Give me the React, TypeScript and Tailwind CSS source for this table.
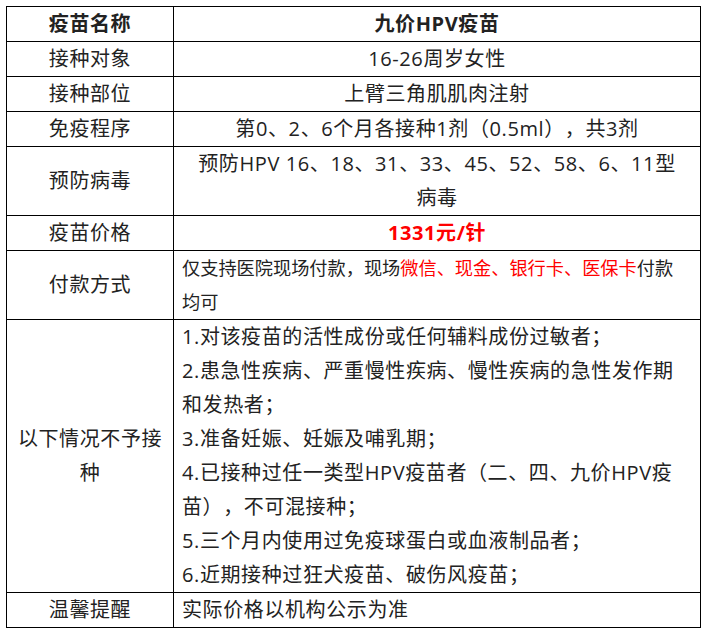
import React from "react";

const L = "border border-black p-0 text-center align-middle leading-[34px] w-[167px]";
const R = "border border-black px-2 py-0 align-middle leading-[34px]";

export default function App() {
  return (
    <div
      className="bg-white w-[705px] h-[632px] pt-[6px] pl-[6px] text-[#222] text-[20px] tracking-[0.6px] [text-spacing-trim:space-all]"
      style={{ fontFamily: '"Open Sans", "Noto Sans CJK SC", sans-serif' }}
    >
      <table className="border-collapse w-[695px] table-fixed">
        <colgroup>
          <col className="w-[167px]" />
          <col />
        </colgroup>
        <tbody>
          <tr>
            <td className={L + " font-bold"}>疫苗名称</td>
            <td className={R + " text-center font-bold"}>九价HPV疫苗</td>
          </tr>
          <tr>
            <td className={L}>接种对象</td>
            <td className={R + " text-center"}>16-26周岁女性</td>
          </tr>
          <tr>
            <td className={L}>接种部位</td>
            <td className={R + " text-center"}>上臂三角肌肌肉注射</td>
          </tr>
          <tr>
            <td className={L}>免疫程序</td>
            <td className={R + " text-center whitespace-nowrap"}>第0、2、6个月各接种1剂（0.5ml），共3剂</td>
          </tr>
          <tr>
            <td className={L}>预防病毒</td>
            <td className={R + " text-center"}>
              <div className="whitespace-nowrap">预防HPV 16、18、31、33、45、52、58、6、11型</div>
              <div>病毒</div>
            </td>
          </tr>
          <tr>
            <td className={L}>疫苗价格</td>
            <td className={R + " text-center font-bold text-[#ff0000]"}>1331元/针</td>
          </tr>
          <tr>
            <td className={L}>付款方式</td>
            <td className={R + " text-left text-[18.2px] tracking-[0px]"}>
              <div className="whitespace-nowrap">
                仅支持医院现场付款，现场<span className="text-[#ff0000]">微信、现金、银行卡、医保卡</span>付款
              </div>
              <div>均可</div>
            </td>
          </tr>
          <tr>
            <td className={L}>
              <div>以下情况不予接</div>
              <div>种</div>
            </td>
            <td className={R + " text-left"}>
              <div className="whitespace-nowrap">1.对该疫苗的活性成份或任何辅料成份过敏者；</div>
              <div className="whitespace-nowrap">2.患急性疾病、严重慢性疾病、慢性疾病的急性发作期</div>
              <div className="whitespace-nowrap">和发热者；</div>
              <div className="whitespace-nowrap">3.准备妊娠、妊娠及哺乳期；</div>
              <div className="whitespace-nowrap">4.已接种过任一类型HPV疫苗者（二、四、九价HPV疫</div>
              <div className="whitespace-nowrap">苗），不可混接种；</div>
              <div className="whitespace-nowrap">5.三个月内使用过免疫球蛋白或血液制品者；</div>
              <div className="whitespace-nowrap">6.近期接种过狂犬疫苗、破伤风疫苗；</div>
            </td>
          </tr>
          <tr>
            <td className={L}>温馨提醒</td>
            <td className={R + " text-left"}>实际价格以机构公示为准</td>
          </tr>
        </tbody>
      </table>
    </div>
  );
}
